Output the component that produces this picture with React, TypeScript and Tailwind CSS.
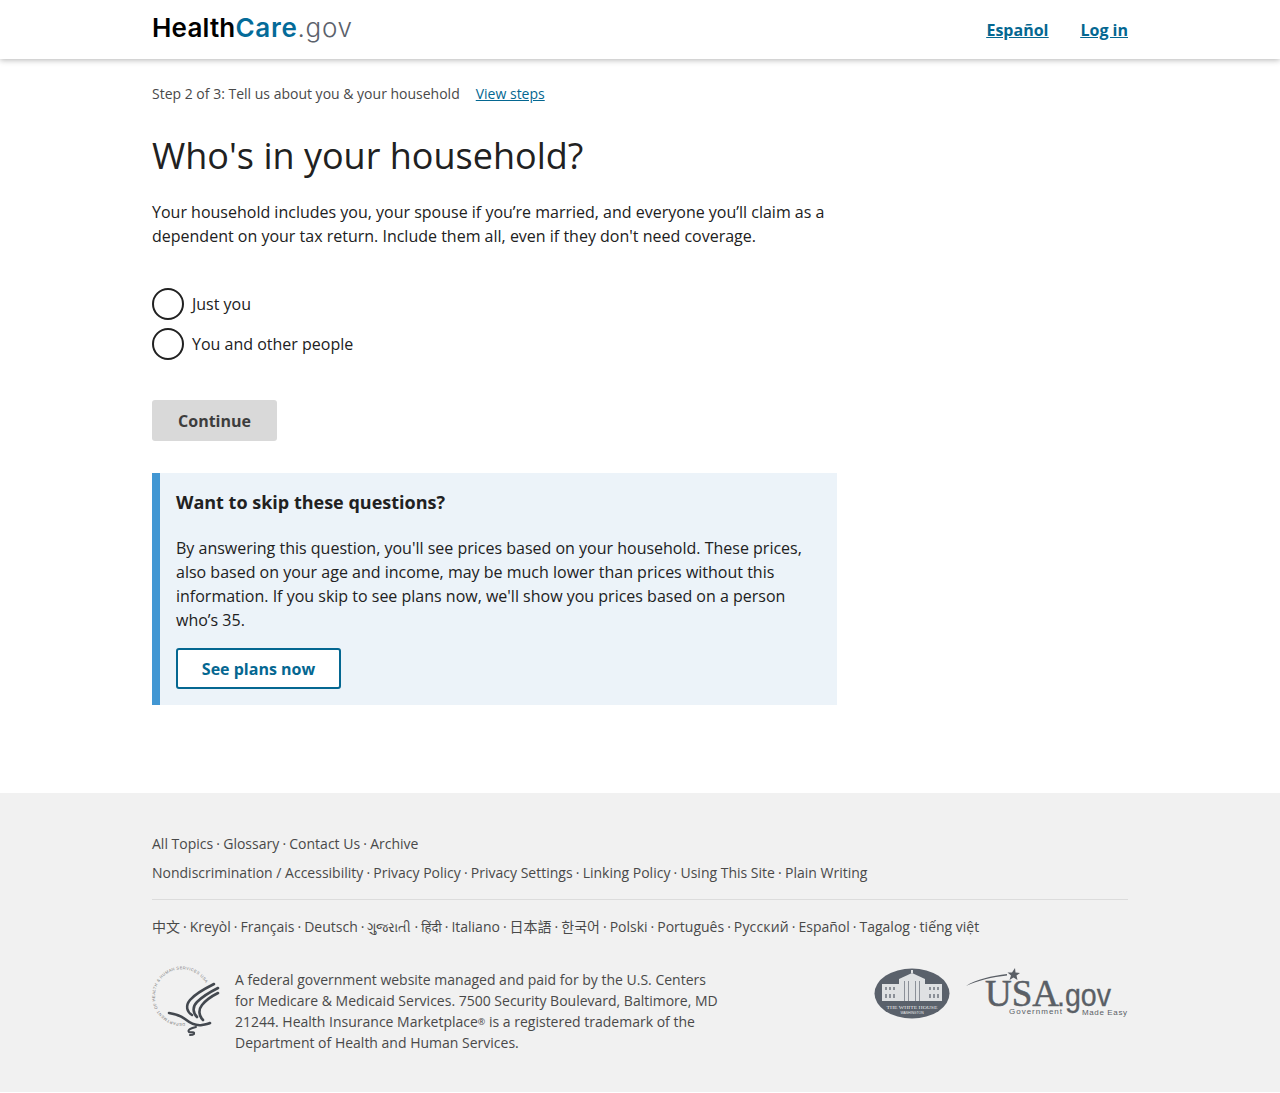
import type { ReactNode } from "react";

const font = { fontFamily: '"Open Sans", "Noto Sans CJK SC", "Noto Sans", sans-serif' };

function LinkRow({ items, className, dot = "mx-[3px]" }: { items: ReactNode[]; className?: string; dot?: string }) {
  return (
    <div className={className}>
      {items.map((item, i) => (
        <span key={i}>
          {i > 0 && <span className={dot}>·</span>}
          <span>{item}</span>
        </span>
      ))}
    </div>
  );
}

function Radio({ label }: { label: string }) {
  return (
    <label className="flex items-center h-8 gap-2">
      <span className="w-8 h-8 rounded-full border-2 border-[#212121] bg-white"></span>
      <span className="text-[#212121]">{label}</span>
    </label>
  );
}

function HhsLogo() {
  return (
    <svg width="68" height="70" viewBox="0 0 68 70" fill="none" className="shrink-0 overflow-visible">
      <defs>
        <path id="hhsring" d="M33 55 A27 27 0 1 1 54 16" />
      </defs>
      <text fontSize="4" fill="#777" fontFamily="Liberation Sans, sans-serif" textLength="116">
        <textPath href="#hhsring">DEPARTMENT OF HEALTH &amp; HUMAN SERVICES USA</textPath>
      </text>
      <g stroke="#43484f" strokeLinecap="round" fill="none">
        <path d="M62 16 C52 21 43 26 38 32 C33 38 35 44 40 47" strokeWidth="2.6" />
        <path d="M66 20 C58 24 50 29 45 34 C40 39 41 45 45 49" strokeWidth="2.6" />
        <path d="M66 25 C60 28 54 32 50 37 C46 42 47 48 51 52" strokeWidth="2.6" />
        <path d="M17 45 C24 46 29 48 33 51 C38 55 44 58 50 57 C53 56.5 56 56 58 55" strokeWidth="2.6" />
        <path d="M44 59 C39 60 35 62 37 64 C39 65 43 63 42 66 C41 67 39 67 38 67" strokeWidth="2" />
      </g>
    </svg>
  );
}

function WhiteHouseLogo() {
  return (
    <svg width="76" height="51" viewBox="0 0 76 51" className="shrink-0">
      <ellipse cx="38" cy="25.5" rx="37.5" ry="25" fill="#5a616b" />
      <g fill="#dfe1e3">
        <rect x="8" y="16" width="60" height="17" />
        <rect x="25" y="11" width="26" height="22" />
        <path d="M25 11 L38 5 L51 11 Z" />
        <rect x="37" y="2" width="2" height="3" />
      </g>
      <g fill="#8b9098">
        <rect x="11" y="19" width="2" height="3" /><rect x="15" y="19" width="2" height="3" /><rect x="19" y="19" width="2" height="3" />
        <rect x="55" y="19" width="2" height="3" /><rect x="59" y="19" width="2" height="3" /><rect x="63" y="19" width="2" height="3" />
        <rect x="11" y="26" width="2" height="4" /><rect x="15" y="26" width="2" height="4" /><rect x="19" y="26" width="2" height="4" />
        <rect x="55" y="26" width="2" height="4" /><rect x="59" y="26" width="2" height="4" /><rect x="63" y="26" width="2" height="4" />
        <rect x="30" y="13" width="1" height="20" /><rect x="34" y="13" width="1" height="20" /><rect x="41" y="13" width="1" height="20" /><rect x="45" y="13" width="1" height="20" />
      </g>
      <text x="12.5" y="41" fontSize="5" fill="#e8e9ea" fontFamily="Liberation Serif, serif" textLength="51" lengthAdjust="spacingAndGlyphs">THE WHITE HOUSE</text>
      <text x="38" y="46" textAnchor="middle" fontSize="3.4" fill="#e8e9ea" fontFamily="Liberation Sans, sans-serif">WASHINGTON</text>
    </svg>
  );
}

function UsaGovLogo() {
  return (
    <svg width="162" height="52" viewBox="0 0 162 52" className="shrink-0">
      <path d="M0 18 C10 11 26 8 41 6 L41 7.5 C26 9 12 12.5 0 18 Z" fill="#5a5f66" />
      <path d="M49 0 L49.5 4.5 L54 5 L50.5 7.5 L51.5 12 L47.5 9.5 L43.5 12 L45 7.5 L41.5 4.5 L46 4.5 Z" fill="#5a5f66" />
      <text x="19" y="38" fontSize="38" fill="#5a5f66" stroke="#5a5f66" strokeWidth="0.5" fontFamily="Liberation Serif, serif" textLength="74" lengthAdjust="spacingAndGlyphs">USA</text>
      <text x="91" y="38" fontSize="31" fill="#5a5f66" stroke="#5a5f66" strokeWidth="0.3" fontFamily="Liberation Sans, sans-serif" textLength="54" lengthAdjust="spacingAndGlyphs">.gov</text>
      <text x="43" y="46" fontSize="8" fill="#5a5f66" fontFamily="Liberation Sans, sans-serif" textLength="53">Government</text>
      <text x="116" y="47" fontSize="8" fill="#5a5f66" fontFamily="Liberation Sans, sans-serif" textLength="45">Made Easy</text>
    </svg>
  );
}

export default function App() {
  return (
    <div className="bg-white min-h-[1093px] text-base leading-6 text-[#212121] flex flex-col" style={font}>
      <header className="h-[59px] bg-white shadow-[0_1px_6px_rgba(0,0,0,0.3)] flex items-center px-[152px] justify-between relative">
        <div className="text-[26px] tracking-[0.7px] leading-none flex items-baseline -mt-1" style={{ fontFamily: 'Inter, sans-serif' }}>
          <span className="font-semibold text-black tracking-[0.2px]">Health</span>
          <span className="font-semibold text-[#046b99]">Care</span>
          <span className="font-light text-[#5b616b]">.gov</span>
        </div>
        <nav className="flex gap-8 font-bold text-[#046791] underline">
          <a>Español</a>
          <a>Log in</a>
        </nav>
      </header>

      <main className="px-[152px] pt-[25px]">
        <div className="text-sm leading-5 text-[#494949] flex gap-4">
          <span>Step 2 of 3: Tell us about you &amp; your household</span>
          <a className="text-[#046791] underline">View steps</a>
        </div>
        <h1 className="text-[36px] leading-[48px] mt-[28px] text-[#212121]">Who's in your household?</h1>
        <p className="mt-[20px] w-[685px]">
          Your household includes you, your spouse if you’re married, and everyone you’ll claim as a dependent on your tax return. Include them all, even if they don't need coverage.
        </p>
        <div className="mt-10 flex flex-col gap-2">
          <Radio label="Just you" />
          <Radio label="You and other people" />
        </div>
        <button className="mt-10 h-[41px] w-[125px] rounded-[3px] bg-[#d9d9d9] font-bold text-[#3d3d3d]">Continue</button>

        <section className="mt-8 w-[685px] bg-[#ecf3f9] border-l-8 border-[#4297d3] pl-4 pr-8 pt-[15px] pb-[15.5px]">
          <h2 className="text-lg leading-7 font-bold">Want to skip these questions?</h2>
          <p className="mt-5">
            By answering this question, you'll see prices based on your household. These prices, also based on your age and income, may be much lower than prices without this information. If you skip to see plans now, we'll show you prices based on a person who’s 35.
          </p>
          <button className="mt-4 h-[41px] w-[165px] rounded-[3px] border-2 border-[#046791] bg-white font-bold text-[#046791]">See plans now</button>
        </section>
      </main>

      <footer className="mt-[88.5px] h-[299px] bg-[#f1f1f1] px-[152px] pt-[40px] text-sm text-[#494949]">
        <LinkRow className="leading-[21px]" dot="mx-[3.2px]" items={["All Topics", "Glossary", "Contact Us", "Archive"]} />
        <LinkRow className="leading-[21px] mt-2" dot="mx-[3.2px]" items={["Nondiscrimination / Accessibility", "Privacy Policy", "Privacy Settings", "Linking Policy", "Using This Site", "Plain Writing"]} />
        <div className="border-t border-[#dcdcdc] mt-4 pt-4">
          <LinkRow
            className="leading-[21px]"
            items={[
              "中文", "Kreyòl", "Français", "Deutsch",
              <span className="text-[13px]">ગુજરાતી</span>,
              <span className="text-[13px]">हिंदी</span>,
              "Italiano",
              "日本語",
              "한국어",
              "Polski", "Português",
              <span className="tracking-[0.15px]">Русский</span>,
              "Español", "Tagalog", "tiếng việt",
            ]}
          />
        </div>
        <div className="mt-8 flex justify-between">
          <div className="flex gap-4 -mt-0.5">
            <HhsLogo />
            <p className="w-[490px] leading-[21px] -ml-[1px] mt-px">
              A federal government website managed and paid for by the U.S. Centers for Medicare &amp; Medicaid Services. 7500 Security Boulevard, Baltimore, MD 21244. Health Insurance Marketplace<span className="text-[9px] leading-none align-[2px]">®</span> is a registered trademark of the Department of Health and Human Services.
            </p>
          </div>
          <div className="flex gap-4 items-start -mt-0.5">
            <WhiteHouseLogo />
            <UsaGovLogo />
          </div>
        </div>
      </footer>
    </div>
  );
}
